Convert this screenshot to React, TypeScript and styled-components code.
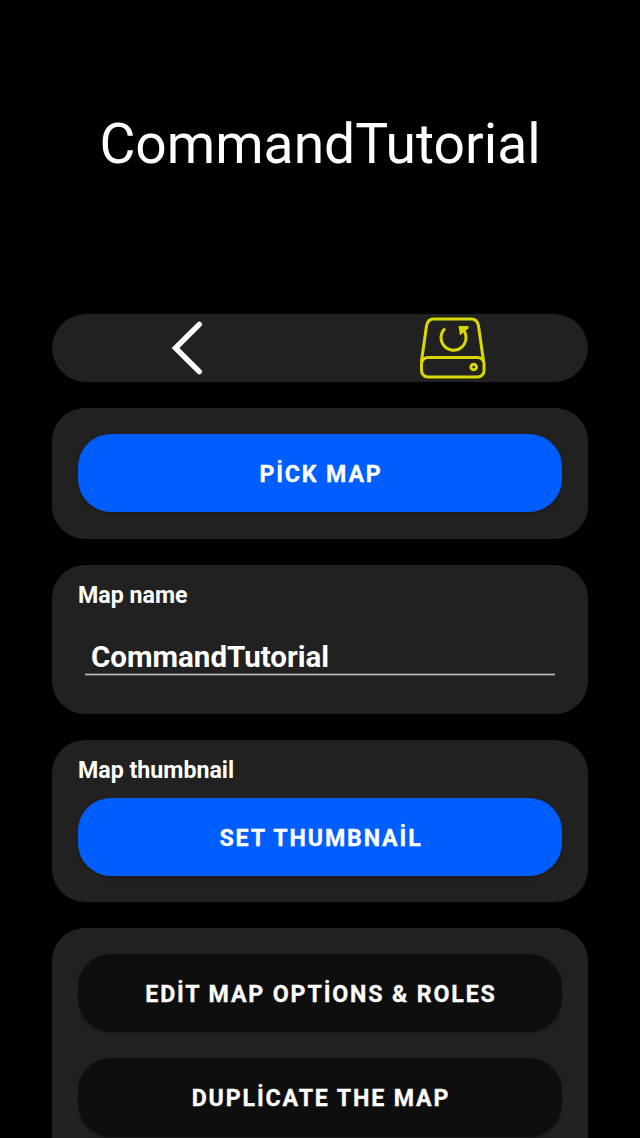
import React from "react";
import styled, { createGlobalStyle } from "styled-components";

const GlobalStyle = createGlobalStyle`
  * { box-sizing: border-box; }
  body { margin: 0; background: #000; overflow: hidden; }
`;

const Screen = styled.main`
  height: 1138px;
  overflow: hidden;
  padding: 0 52px;
  background: #000;
  color: #fff;
  font-family: Roboto, sans-serif;
  display: flex;
  flex-direction: column;
  gap: 26px;
`;

const Header = styled.header`
  height: 288px;
  flex: none;
  display: flex;
  align-items: center;
  justify-content: center;
`;

const Title = styled.h1`
  margin: 0;
  font-size: 55.2px;
  font-weight: 400;
  line-height: 66px;
  white-space: nowrap;
`;

const Toolbar = styled.nav`
  height: 68px;
  flex: none;
  display: grid;
  grid-template-columns: 1fr 1fr;
  justify-items: center;
  align-items: center;
  border-radius: 34px;
  background: #212121;
`;

const IconButton = styled.button`
  border: 0;
  padding: 0;
  background: none;
  display: flex;
  svg { display: block; }
`;

const Card = styled.section<{ $height: number; $top?: number }>`
  height: ${(p) => p.$height}px;
  flex: none;
  padding: ${(p) => p.$top ?? 26}px 26px 0;
  border-radius: 33px;
  background: #212121;
  display: flex;
  flex-direction: column;
`;

const Label = styled.label`
  font-size: 23.2px;
  font-weight: 700;
  line-height: 28px;
`;

const Button = styled.button<{ $dark?: boolean }>`
  height: 78.4px;
  flex: none;
  width: 100%;
  padding: 1px 0 0 2px;
  border: 0;
  border-radius: 33px;
  background: ${(p) => (p.$dark ? "#0e0e0e" : "#005eff")};
  color: #fff;
  font: 700 23.2px/28px Roboto, sans-serif;
  letter-spacing: 1.85px;
  -webkit-text-stroke: 0.3px #fff;
  box-shadow: 0 2px 3px rgba(0, 0, 0, 0.2);
  & + & { margin-top: 26px; }
  ${Label} + & { margin-top: 14px; }
`;

const Field = styled.input`
  margin: 27px 7px 0;
  height: 39px;
  padding: 3px 6px 0;
  border: 0;
  border-bottom: 1px solid #bdbdbd;
  border-radius: 0;
  box-shadow: inset 0 -1px #555, 0 1px #555;
  background: none;
  color: #fff;
  outline: 0;
  font: 700 29.5px/35px Roboto, sans-serif;
`;

export default function App() {
  return (
    <>
      <GlobalStyle />
      <Screen>
        <Header>
          <Title>CommandTutorial</Title>
        </Header>
        <Toolbar>
          <IconButton aria-label="Back">
            <svg width="68" height="68" viewBox="0 0 68 68" fill="none" stroke="#fff" strokeWidth="5.4" strokeLinecap="round">
              <path d="M47.3 10.3 23.5 34 47.3 57.7" />
            </svg>
          </IconButton>
          <IconButton aria-label="Restore backup">
            <svg width="68" height="68" viewBox="0 0 68 68" fill="none" stroke="#d8d800" strokeWidth="3" strokeLinecap="round">
              <path d="M1.500 47 6.500 12Q7.500 5 14 5H51Q57.500 5 58.500 12L63.500 47" />
              <rect x="1.500" y="43.500" width="62.500" height="19.500" rx="6.500" />
              <circle cx="53.700" cy="53" r="2.800" />
              <path d="M25 14.500A12.500 12.500 0 1 0 43 15.500" strokeLinecap="butt" />
              <path d="M38.500 12H48.500V14.500L45 17 40 21.500Z" fill="#d8d800" stroke="none" />
            </svg>
          </IconButton>
        </Toolbar>
        <Card $height={131}>
          <Button>PİCK MAP</Button>
        </Card>
        <Card $height={149} $top={16}>
          <Label htmlFor="map-name">Map name</Label>
          <Field id="map-name" defaultValue="CommandTutorial" />
        </Card>
        <Card $height={162} $top={16}>
          <Label>Map thumbnail</Label>
          <Button>SET THUMBNAİL</Button>
        </Card>
        <Card $height={300}>
          <Button $dark>EDİT MAP OPTİONS &amp; ROLES</Button>
          <Button $dark>DUPLİCATE THE MAP</Button>
        </Card>
      </Screen>
    </>
  );
}
